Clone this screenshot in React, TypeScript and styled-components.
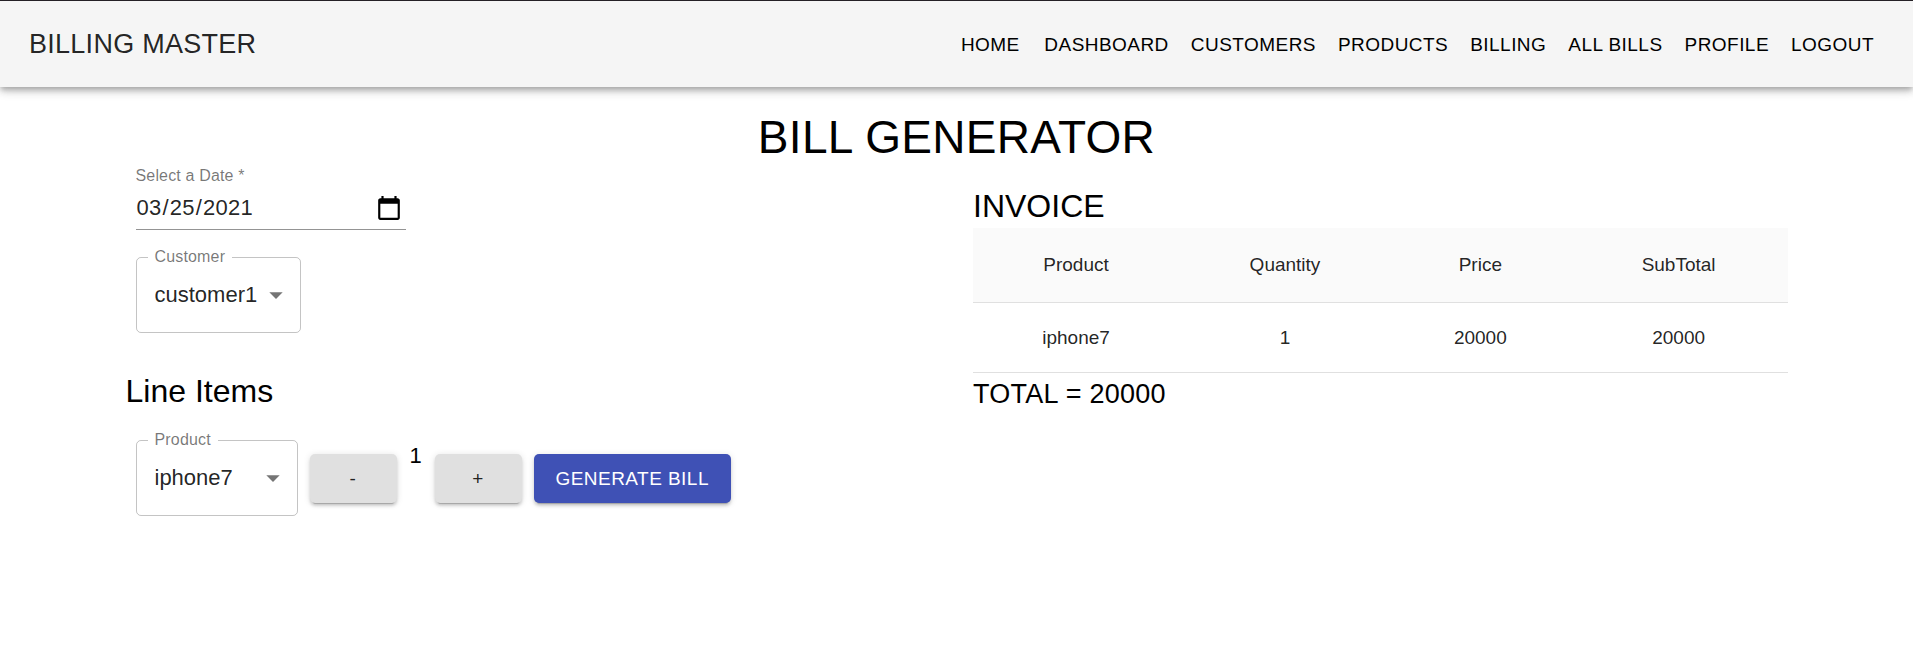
import React, { useState } from "react";
import styled, { createGlobalStyle } from "styled-components";

const GlobalStyle = createGlobalStyle`
  *, *::before, *::after { box-sizing: border-box; }
  body {
    margin: 0;
    background: #fff;
    color: #000;
    font-family: "Liberation Sans", Arial, sans-serif;
    font-size: 22px;
  }
  button, input, select { font-family: inherit; }
  h1, h2, p { margin: 0; font-weight: 400; }
`;

const AppBar = styled.header`
  position: relative;
  display: flex;
  align-items: center;
  justify-content: space-between;
  min-height: 87px;
  padding: 0 28px 0 29px;
  border-top: 1px solid #252126;
  background: #f5f5f5;
  box-shadow: 0 3px 5px -1px rgba(0, 0, 0, 0.2), 0 5px 7px rgba(0, 0, 0, 0.14),
    0 1px 14px rgba(0, 0, 0, 0.12);
`;

const Brand = styled.span`
  color: rgba(0, 0, 0, 0.87);
  font-size: 27px;
  line-height: 43px;
  letter-spacing: 0.01em;
`;

const Nav = styled.nav`
  display: flex;
  flex-wrap: wrap;
`;

const NavLink = styled.a`
  min-width: 86px;
  padding: 8px 11px;
  color: #000;
  font-size: 19px;
  line-height: 33px;
  letter-spacing: 0.024em;
  text-align: center;
  text-decoration: none;
`;

const Page = styled.main`
  max-width: 1728px;
  margin: 0 auto;
  padding: 21px 33px;
`;

const Title = styled.h1`
  font-size: 46px;
  line-height: 58px;
  letter-spacing: 0.007em;
  text-align: center;
`;

const Columns = styled.div`
  display: grid;
  grid-template-columns: 1fr 1fr;
  gap: 33px;
`;

const Form = styled.form`
  display: flex;
  flex-direction: column;
  align-items: flex-start;
`;

const DateField = styled.div`
  display: flex;
  flex-direction: column;
  width: 270px;
  margin: 0 10px 27px;
`;

const DateLabel = styled.label`
  color: rgba(0, 0, 0, 0.54);
  font-size: 16px;
  line-height: 20px;
  letter-spacing: 0.01em;
`;

const DateInput = styled.input`
  width: 100%;
  height: 44px;
  padding: 8px 0;
  border: 0;
  border-bottom: 1px solid rgba(0, 0, 0, 0.42);
  outline: 0;
  background: transparent;
  color: rgba(0, 0, 0, 0.87);
  font-size: 22px;
  letter-spacing: 0.01em;

  &::-webkit-calendar-picker-indicator {
    width: 26px;
    height: 26px;
    padding: 0;
    margin-right: 4px;
    background-size: 26px 26px;
  }
`;

const Outlined = styled.div`
  position: relative;
  min-width: 162px;
  margin-left: 10px;
`;

const OutlinedLabel = styled.label`
  position: absolute;
  top: -11px;
  left: 12px;
  padding: 0 7px;
  background: #fff;
  color: rgba(0, 0, 0, 0.54);
  font-size: 16px;
  line-height: 22px;
  letter-spacing: 0.01em;
`;

const Select = styled.select`
  display: block;
  width: 100%;
  height: 76px;
  padding: 0 42px 2px 18px;
  border: 1px solid rgba(0, 0, 0, 0.23);
  border-radius: 5px;
  outline: 0;
  appearance: none;
  background: transparent;
  color: rgba(0, 0, 0, 0.87);
  font-size: 22px;
`;

const Arrow = styled.svg`
  position: absolute;
  top: 22px;
  right: 9px;
  width: 32px;
  height: 32px;
  fill: rgba(0, 0, 0, 0.54);
  pointer-events: none;
`;

const SectionTitle = styled.h2<{ $top: number; $bottom: number }>`
  margin-top: ${(p) => p.$top}px;
  margin-bottom: ${(p) => p.$bottom}px;
  font-size: 32px;
  line-height: 43px;
`;

const LineItem = styled.div`
  display: flex;
  align-items: center;
  gap: 12px;
`;

const Stepper = styled.div`
  display: flex;
  align-items: center;
`;

const Count = styled.output`
  align-self: flex-start;
  width: 38px;
  height: 76px;
  line-height: 31px;
  text-align: center;
`;

const Button = styled.button<{ $primary?: boolean }>`
  min-width: 87px;
  height: 49px;
  padding: 0 22px;
  border: 0;
  border-radius: 5px;
  background: ${(p) => (p.$primary ? "#3f51b5" : "#e0e0e0")};
  color: ${(p) => (p.$primary ? "#fff" : "rgba(0, 0, 0, 0.87)")};
  font-size: 19px;
  line-height: 33px;
  letter-spacing: 0.024em;
  cursor: pointer;
  box-shadow: 0 4px 1px -3px rgba(0, 0, 0, 0.2), 0 3px 3px rgba(0, 0, 0, 0.14),
    0 1px 7px rgba(0, 0, 0, 0.12);
`;

const Table = styled.table`
  width: 100%;
  border-collapse: collapse;
  color: rgba(0, 0, 0, 0.87);
  font-size: 19px;
`;

const HeadCell = styled.th`
  height: 74px;
  padding: 0 22px;
  border-bottom: 1px solid #e0e0e0;
  background: #fafafa;
  font-weight: 400;
  text-align: center;
`;

const Cell = styled.td`
  height: 70px;
  padding: 2px 22px 0;
  border-bottom: 1px solid #e0e0e0;
  text-align: center;
`;

const Total = styled.p`
  font-size: 27px;
  line-height: 43px;
  letter-spacing: 0.01em;
`;

const links = ["HOME", "DASHBOARD", "CUSTOMERS", "PRODUCTS", "BILLING", "ALL BILLS", "PROFILE", "LOGOUT"];
const headings = ["Product", "Quantity", "Price", "SubTotal"];
const PRICE = 20000;

function SelectField({ id, label, value }: { id: string; label: string; value: string }) {
  return (
    <Outlined>
      <Select id={id} defaultValue={value}>
        <option value={value}>{value}</option>
      </Select>
      <OutlinedLabel htmlFor={id}>{label}</OutlinedLabel>
      <Arrow viewBox="0 0 24 24" aria-hidden="true">
        <path d="M7 10l5 5 5-5z" />
      </Arrow>
    </Outlined>
  );
}

export default function App() {
  const [count, setCount] = useState(1);
  return (
    <>
      <GlobalStyle />
      <AppBar>
        <Brand>BILLING MASTER</Brand>
        <Nav>
          {links.map((link) => (
            <NavLink key={link} href={`#${link.toLowerCase().replace(" ", "-")}`}>
              {link}
            </NavLink>
          ))}
        </Nav>
      </AppBar>
      <Page>
        <Title>BILL GENERATOR</Title>
        <Columns>
          <Form onSubmit={(e) => e.preventDefault()}>
            <DateField>
              <DateLabel htmlFor="date">Select a Date *</DateLabel>
              <DateInput id="date" type="date" required defaultValue="2021-03-25" />
            </DateField>
            <SelectField id="customer" label="Customer" value="customer1" />
            <SectionTitle $top={37} $bottom={27}>Line Items</SectionTitle>
            <LineItem>
              <SelectField id="product" label="Product" value="iphone7" />
              <Stepper>
                <Button type="button" aria-label="Decrease" onClick={() => setCount(Math.max(1, count - 1))}>
                  -
                </Button>
                <Count>{count}</Count>
                <Button type="button" aria-label="Increase" onClick={() => setCount(count + 1)}>
                  +
                </Button>
              </Stepper>
              <Button type="submit" $primary>
                GENERATE BILL
              </Button>
            </LineItem>
          </Form>
          <section>
            <SectionTitle $top={19} $bottom={0}>INVOICE</SectionTitle>
            <Table>
              <thead>
                <tr>
                  {headings.map((h) => (
                    <HeadCell key={h} scope="col">{h}</HeadCell>
                  ))}
                </tr>
              </thead>
              <tbody>
                <tr>
                  <Cell>iphone7</Cell>
                  <Cell>{count}</Cell>
                  <Cell>{PRICE}</Cell>
                  <Cell>{PRICE * count}</Cell>
                </tr>
              </tbody>
            </Table>
            <Total>TOTAL = {PRICE * count}</Total>
          </section>
        </Columns>
      </Page>
    </>
  );
}
